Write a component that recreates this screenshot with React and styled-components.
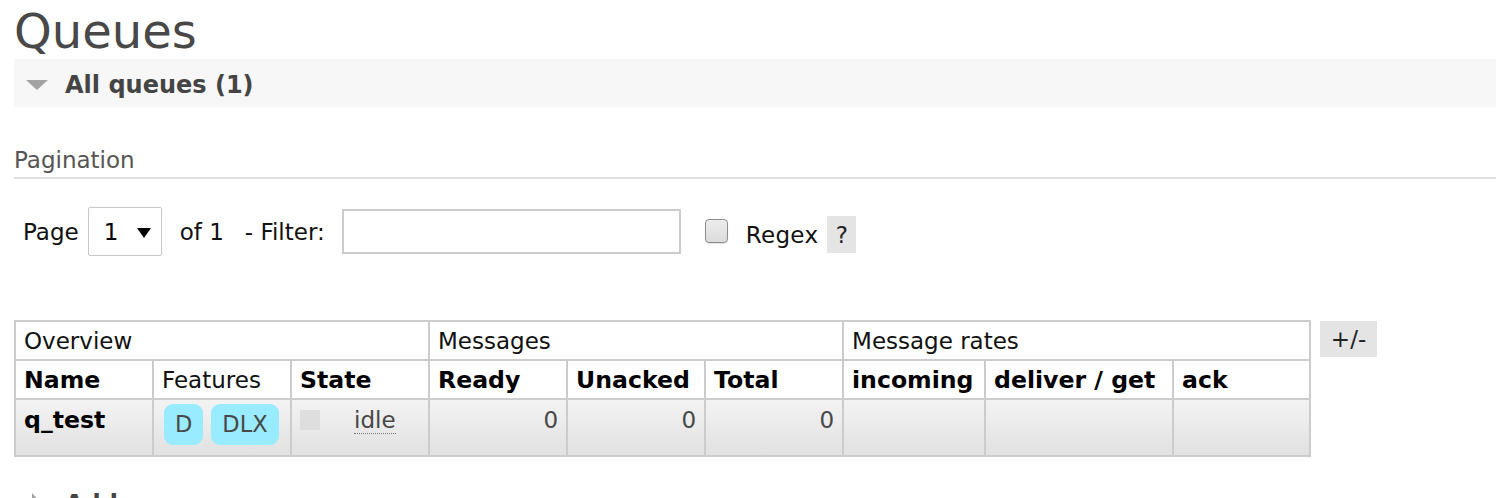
import React from "react";
import styled, { createGlobalStyle } from "styled-components";

const GlobalStyle = createGlobalStyle`
  html, body {
    margin: 0;
    padding: 0;
    background: #fff;
  }
  body {
    font-family: "DejaVu Sans", Verdana, sans-serif;
    font-size: 23px;
    color: #484848;
  }
`;

const columns = [
  { key: "name", label: "Name", width: 138, bold: true },
  { key: "features", label: "Features", width: 138, bold: false },
  { key: "state", label: "State", width: 138, bold: true },
  { key: "ready", label: "Ready", width: 138, bold: true },
  { key: "unacked", label: "Unacked", width: 138, bold: true },
  { key: "total", label: "Total", width: 138, bold: true },
  { key: "incoming", label: "incoming", width: 142, bold: true },
  { key: "deliver", label: "deliver / get", width: 188, bold: true },
  { key: "ack", label: "ack", width: 137, bold: true },
];

const groups = ["Overview", "Messages", "Message rates"];

const queue = {
  name: "q_test",
  features: ["D", "DLX"],
  state: "idle",
  ready: 0,
  unacked: 0,
  total: 0,
};

function App() {
  return (
    <>
      <GlobalStyle />
      <Page>
        <Title>Queues</Title>

        <SectionHeader $open>
          <Toggle>
            <Arrow $open />
          </Toggle>
          All queues (1)
        </SectionHeader>

        <SubHeader>Pagination</SubHeader>
        <Controls>
          <Label>Page</Label>
          <Select>
            <span>1</span>
            <SelectArrow />
          </Select>
          <Label $gap={18}>of 1</Label>
          <Label $gap={21}>- Filter:</Label>
          <FilterInput type="text" />
          <Checkbox type="checkbox" />
          <RegexLabel>Regex</RegexLabel>
          <HelpBox>?</HelpBox>
        </Controls>

        <TableArea>
          <Table>
            <colgroup>
              {columns.map((c) => (
                <Col key={c.key} $w={c.width} />
              ))}
            </colgroup>
            <thead>
              <tr>
                {groups.map((g) => (
                  <GroupCell key={g} colSpan={3}>
                    {g}
                  </GroupCell>
                ))}
              </tr>
              <tr>
                {columns.map((c) => (
                  <HeadCell key={c.key} $bold={c.bold}>
                    {c.label}
                  </HeadCell>
                ))}
              </tr>
            </thead>
            <tbody>
              <DataRow>
                <DataCell>
                  <QueueName>{queue.name}</QueueName>
                </DataCell>
                <DataCell>
                  <TagList>
                    {queue.features.map((f) => (
                      <Tag key={f}>{f}</Tag>
                    ))}
                  </TagList>
                </DataCell>
                <DataCell>
                  <StateBox>
                    <StateDot />
                    <StateText>{queue.state}</StateText>
                  </StateBox>
                </DataCell>
                <DataCell $num>{queue.ready}</DataCell>
                <DataCell $num>{queue.unacked}</DataCell>
                <DataCell $num>{queue.total}</DataCell>
                <DataCell />
                <DataCell />
                <DataCell />
              </DataRow>
            </tbody>
          </Table>
          <ColumnsButton>+/-</ColumnsButton>
        </TableArea>

        <SectionHeader $gapTop={21}>
          <Toggle>
            <Arrow />
          </Toggle>
          Add a new queue
        </SectionHeader>
      </Page>
    </>
  );
}

export default App;

const Page = styled.div`
  padding-left: 14px;
  height: 498px;
  overflow: hidden;
`;

const Title = styled.h1`
  margin: 0;
  height: 59px;
  font-size: 48px;
  font-weight: normal;
  line-height: 63px;
  color: #484848;
`;

const SectionHeader = styled.h2`
  margin: ${(p) => p.$gapTop || 0}px 0 0 0;
  height: 48px;
  box-sizing: border-box;
  padding: 4px 0 0 12px;
  display: flex;
  align-items: center;
  gap: 17px;
  background: ${(p) => (p.$open ? "#f7f7f7" : "transparent")};
  font-size: 24px;
  font-weight: bold;
  color: #444;
  white-space: nowrap;
`;

const Toggle = styled.span`
  width: 22px;
  height: 22px;
  display: flex;
  align-items: center;
  justify-content: center;
`;

const Arrow = styled.span`
  width: 0;
  height: 0;
  ${(p) =>
    p.$open
      ? `
    border-left: 11px solid transparent;
    border-right: 11px solid transparent;
    border-top: 10px solid #a3a3a3;
  `
      : `
    border-top: 11px solid transparent;
    border-bottom: 11px solid transparent;
    border-left: 10px solid #a3a3a3;
  `}
`;

const SubHeader = styled.h3`
  margin: 39px 0 0 0;
  padding-bottom: 3px;
  font-size: 23px;
  font-weight: normal;
  line-height: 28px;
  color: #555;
  border-bottom: 2px solid #e0e0e0;
`;

const Controls = styled.div`
  margin-top: 28px;
  padding-left: 9px;
  display: flex;
  align-items: center;
  color: #111;
`;

const Label = styled.span`
  margin-left: ${(p) => p.$gap || 0}px;
  white-space: nowrap;
`;

const Select = styled.div`
  margin-left: 9px;
  width: 74px;
  height: 49px;
  box-sizing: border-box;
  border: 1px solid #c8c8c8;
  border-radius: 2px;
  background: #fff;
  display: flex;
  align-items: center;
  padding: 0 10px 0 15px;
  justify-content: space-between;
  color: #000;
`;

const SelectArrow = styled.span`
  width: 0;
  height: 0;
  margin-top: 2px;
  border-left: 7.5px solid transparent;
  border-right: 7.5px solid transparent;
  border-top: 10px solid #000;
`;

const FilterInput = styled.input`
  margin-left: 17px;
  width: 339px;
  height: 45px;
  box-sizing: border-box;
  border: 2px solid #ccc;
  background: #fff;
  outline: none;
  font: inherit;
`;

const Checkbox = styled.input`
  appearance: none;
  margin: -2px 0 0 24px;
  width: 23px;
  height: 24px;
  box-sizing: border-box;
  border: 1.5px solid #8e8e8e;
  border-radius: 4px;
  background: linear-gradient(#ececec, #dcdcdc);
  box-shadow: 0 1px 1px rgba(0, 0, 0, 0.12);
`;

const RegexLabel = styled.span`
  margin: 6px 0 0 18px;
  letter-spacing: 0.3px;
`;

const HelpBox = styled.span`
  margin: 6px 0 0 9px;
  width: 29px;
  height: 37px;
  display: flex;
  align-items: center;
  justify-content: center;
  background: #e4e4e4;
  color: #222;
`;

const TableArea = styled.div`
  margin-top: 64px;
  display: flex;
  align-items: flex-start;
  gap: 9px;
`;

const Table = styled.table`
  border-collapse: collapse;
  table-layout: fixed;
  width: 1297px;
  border: 2px solid #ccc;
`;

const Col = styled.col`
  width: ${(p) => p.$w}px;
`;

const GroupCell = styled.th`
  height: 37px;
  padding: 0 8px;
  border: 2px solid #ccc;
  text-align: left;
  font-weight: normal;
  color: #111;
  white-space: nowrap;
  background: #fff;
`;

const HeadCell = styled.th`
  height: 37px;
  padding: 0 8px;
  border: 2px solid #ccc;
  text-align: left;
  font-weight: ${(p) => (p.$bold ? "bold" : "normal")};
  font-size: ${(p) => (p.$bold ? "23.6px" : "23px")};
  color: ${(p) => (p.$bold ? "#000" : "#111")};
  white-space: nowrap;
  background: #fff;
`;

const DataRow = styled.tr`
  background: linear-gradient(#f3f3f3, #e1e1e1);
`;

const DataCell = styled.td`
  height: 57px;
  box-sizing: border-box;
  padding: 6px 8px 0 8px;
  border: 2px solid #ccc;
  vertical-align: top;
  line-height: 28px;
  text-align: ${(p) => (p.$num ? "right" : "left")};
  color: #484848;
`;

const QueueName = styled.span`
  font-weight: bold;
  font-size: 23.6px;
  color: #000;
`;

const TagList = styled.div`
  display: flex;
  gap: 8px;
  margin: -2px 0 0 2px;
`;

const Tag = styled.span`
  height: 41px;
  line-height: 41px;
  padding: 0 11px;
  border-radius: 9px;
  background: #99ebff;
  color: #484848;
  font-size: 22.5px;
`;

const StateBox = styled.div`
  display: flex;
  align-items: center;
  height: 28px;
`;

const StateDot = styled.span`
  width: 20px;
  height: 20px;
  background: #dedede;
  margin-right: 34px;
`;

const StateText = styled.span`
  border-bottom: 1.5px dotted #777;
  line-height: 26px;
`;

const ColumnsButton = styled.div`
  margin-top: 1px;
  width: 57px;
  height: 36px;
  display: flex;
  align-items: center;
  justify-content: center;
  background: #e4e4e4;
  color: #222;
`;
